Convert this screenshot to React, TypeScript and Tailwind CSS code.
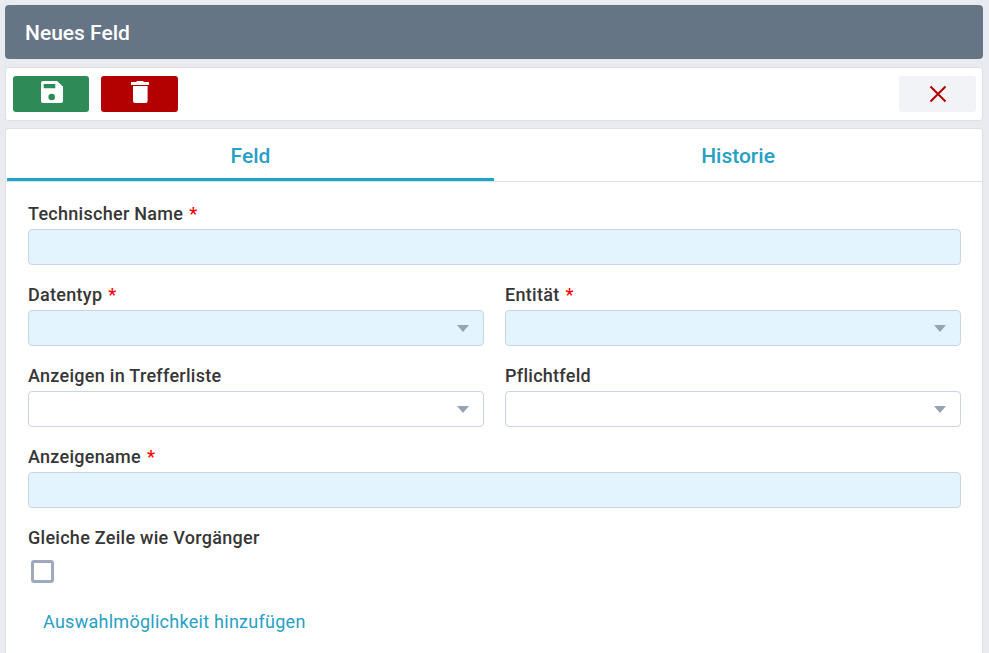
import React from "react";

function Label({ text, req }: { text: string; req?: boolean }) {
  return (
    <label className="block h-[21px] text-[18px] leading-[21px] font-medium tracking-[0.28px] text-[#363636] whitespace-nowrap">
      {text}
      {req && <span className="ml-[6px] text-[#ff0000]">*</span>}
    </label>
  );
}

function Input({ tinted }: { tinted?: boolean }) {
  return (
    <div className={`h-[36px] rounded-[4px] border border-[#c9d5e4] ${tinted ? "bg-[#e3f4ff]" : "bg-white"}`} />
  );
}

function Select({ tinted }: { tinted?: boolean }) {
  return (
    <div className={`flex h-[36px] items-center justify-end rounded-[4px] border border-[#c9d5e4] pr-[14px] ${tinted ? "bg-[#e3f4ff]" : "bg-white"}`}>
      <div className="h-0 w-0 border-x-[6.5px] border-t-[7px] border-x-transparent border-t-[#98a2b3]" />
    </div>
  );
}

export default function App() {
  return (
    <div className="h-[653px] w-[989px] overflow-hidden bg-[#e9ebf0] pl-[5px] pr-[6px] pt-[5px] font-['Roboto',sans-serif]">
      <div className="flex h-[54px] items-center rounded-[4px] bg-[#667585] pl-[20px] pt-[4px] text-[21px] font-medium text-white">
        Neues Feld
      </div>

      <div className="mt-[8px] flex h-[54px] items-center justify-between rounded-[3px] border border-[#dee0e5] bg-white pl-[7px] pr-[6px]">
        <div className="flex gap-[12px]">
          <button className="flex h-[36px] w-[76px] items-center justify-center rounded-[3px] bg-[#2e8b57]">
            <svg width="22" height="22" viewBox="0 0 22 22" className="mb-[4px] ml-[2px]">
              <path fill="#ffffff" fillRule="evenodd" d="M2 0H16l6 5.5V20a2 2 0 0 1-2 2H2a2 2 0 0 1-2-2V2A2 2 0 0 1 2 0ZM2.7 3v4.3h11.6V3H2.7Zm8 9.7a3.3 3.3 0 1 0 0 6.6 3.3 3.3 0 0 0 0-6.6Z" />
            </svg>
          </button>
          <button className="flex h-[36px] w-[77px] items-center justify-center rounded-[3px] bg-[#b30000]">
            <svg width="18" height="22" viewBox="0 0 18 22" className="mb-[4px]">
              <path fill="#ffffff" d="M6 0h6l1 1h5v3H0V1h5l1-1ZM2 5h14.6V20a2 2 0 0 1-2 2H4a2 2 0 0 1-2-2V5Z" />
            </svg>
          </button>
        </div>
        <button className="flex h-[36px] w-[77px] items-center justify-center rounded-[3px] bg-[#f2f3f7]">
          <svg width="18" height="18" viewBox="0 0 18 18">
            <path stroke="#b30000" strokeWidth="2" fill="none" d="M1.5 1.5l15 15M16.5 1.5l-15 15" />
          </svg>
        </button>
      </div>

      <div className="mt-[7px] h-[530px] rounded-t-[3px] border border-[#dee0e5] bg-white">
        <div className="flex h-[53px] border-b border-[#dee0e5] pl-px">
          <div className="flex w-[487px] items-center justify-center border-b-[3px] border-[#1ba6c7] pt-[7px] text-[21px] font-medium text-[#27a0c4]">
            Feld
          </div>
          <div className="flex w-[488px] items-center justify-center pt-[4px] text-[21px] font-medium text-[#27a0c4]">
            Historie
          </div>
        </div>

        <div className="pl-[22px] pr-[21px] pt-[21px]">
          <Label text="Technischer Name" req />
          <div className="mt-[5px]"><Input tinted /></div>

          <div className="mt-[19px] grid grid-cols-2 gap-x-[21px]">
            <div>
              <Label text="Datentyp" req />
              <div className="mt-[5px]"><Select tinted /></div>
            </div>
            <div>
              <Label text="Entität" req />
              <div className="mt-[5px]"><Select tinted /></div>
            </div>
          </div>

          <div className="mt-[19px] grid grid-cols-2 gap-x-[21px]">
            <div>
              <Label text="Anzeigen in Trefferliste" />
              <div className="mt-[5px]"><Select /></div>
            </div>
            <div>
              <Label text="Pflichtfeld" />
              <div className="mt-[5px]"><Select /></div>
            </div>
          </div>

          <div className="mt-[19px]">
            <Label text="Anzeigename" req />
            <div className="mt-[5px]"><Input tinted /></div>
          </div>

          <div className="mt-[19px]">
            <Label text="Gleiche Zeile wie Vorgänger" />
            <div className="ml-[3px] mt-[12px] h-[23px] w-[23px] rounded-[3px] border-[3px] border-[#a0a8bd] bg-white" />
          </div>

          <div className="ml-[15px] mt-[27px] text-[18px] leading-[24px] tracking-[0.27px] text-[#27a0c4]">
            Auswahlmöglichkeit hinzufügen
          </div>
        </div>
      </div>
    </div>
  );
}
